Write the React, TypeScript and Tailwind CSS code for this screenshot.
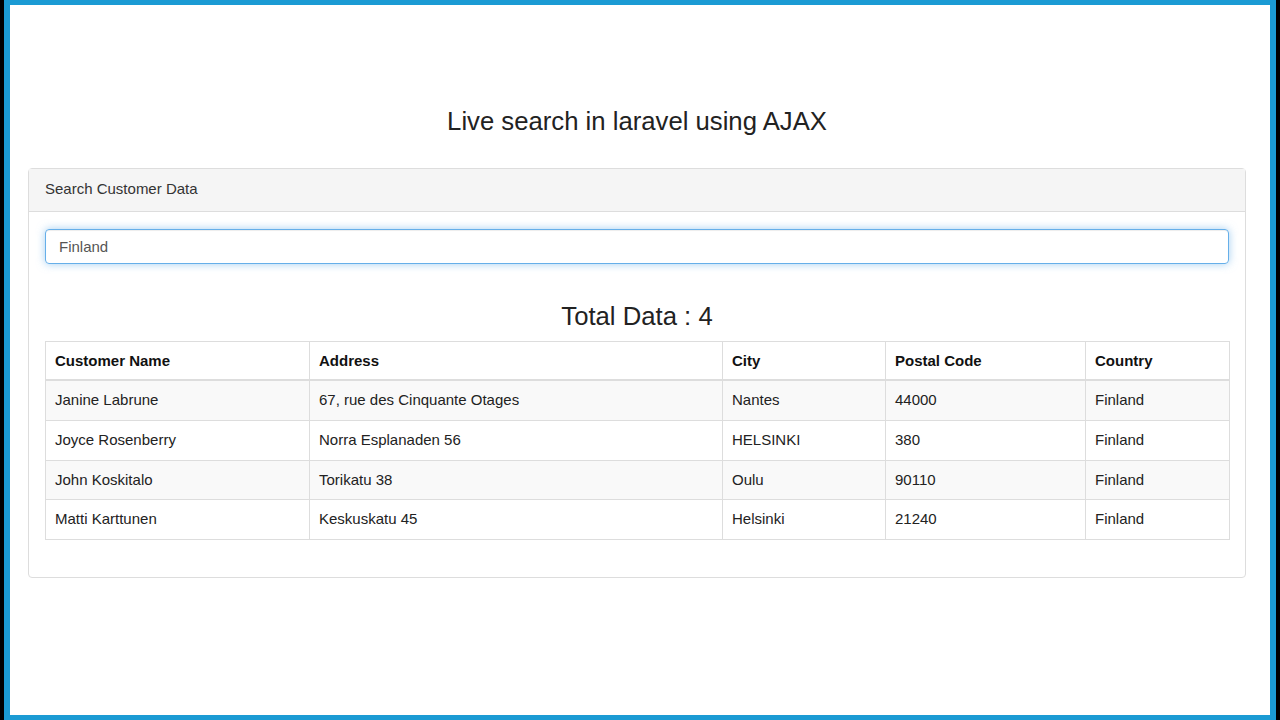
const customers = [
  { name: "Janine Labrune", address: "67, rue des Cinquante Otages", city: "Nantes", postal: "44000", country: "Finland" },
  { name: "Joyce Rosenberry", address: "Norra Esplanaden 56", city: "HELSINKI", postal: "380", country: "Finland" },
  { name: "John Koskitalo", address: "Torikatu 38", city: "Oulu", postal: "90110", country: "Finland" },
  { name: "Matti Karttunen", address: "Keskuskatu 45", city: "Helsinki", postal: "21240", country: "Finland" },
];

const headers = ["Customer Name", "Address", "City", "Postal Code", "Country"];
const widths = ["w-[264px]", "w-[413px]", "w-[163px]", "w-[200px]", "w-[144px]"];

export default function App() {
  return (
    <div className="h-[720px] w-[1280px] bg-black px-[4px] font-['Liberation_Sans',Arial,sans-serif] text-[#333]">
      <div className="h-full border-x-[6px] border-y-[5px] border-[#1b9bd4] bg-white pt-[102px] pl-[18px] pr-[24px]">
        <h3 className="text-center text-[25.7px] leading-[29px] text-[#222]">
          Live search in laravel using AJAX
        </h3>

        <div className="mt-[32px] rounded-[4px] border border-[#ddd] bg-white">
          <div className="flex h-[43px] items-center border-b border-[#ddd] bg-[#f5f5f5] px-[16px] pb-[2px] text-[15px]">
            Search Customer Data
          </div>

          <div className="px-[16px] pt-[17px] pb-[37px]">
            <input
              type="text"
              defaultValue="Finland"
              className="block h-[35px] w-full rounded-[4px] border border-[#66afe9] px-[13px] text-[15px] text-[#555] shadow-[inset_0_1px_1px_rgba(0,0,0,0.075),0_0_8px_rgba(102,175,233,0.6)] outline-none"
            />

            <h3 className="mt-[38px] mb-[11px] text-center text-[25.7px] leading-[28px] text-[#222]">
              Total Data : 4
            </h3>

            <table className="w-full table-fixed border-collapse border border-[#ddd] text-[15px]">
              <colgroup>
                {widths.map((w) => (
                  <col key={w} className={w} />
                ))}
              </colgroup>
              <thead>
                <tr>
                  {headers.map((h) => (
                    <th
                      key={h}
                      className="border border-b-2 border-[#ddd] px-[9px] py-[8px] text-left font-bold leading-[21px] text-[#111]"
                    >
                      {h}
                    </th>
                  ))}
                </tr>
              </thead>
              <tbody>
                {customers.map((c, i) => (
                  <tr key={c.name} className={i % 2 === 0 ? "bg-[#f9f9f9]" : "bg-white"}>
                    {[c.name, c.address, c.city, c.postal, c.country].map((v, j) => (
                      <td
                        key={j}
                        className="border border-[#ddd] px-[9px] py-[9px] leading-[20.75px] text-[#222]"
                      >
                        {v}
                      </td>
                    ))}
                  </tr>
                ))}
              </tbody>
            </table>
          </div>
        </div>
      </div>
    </div>
  );
}
